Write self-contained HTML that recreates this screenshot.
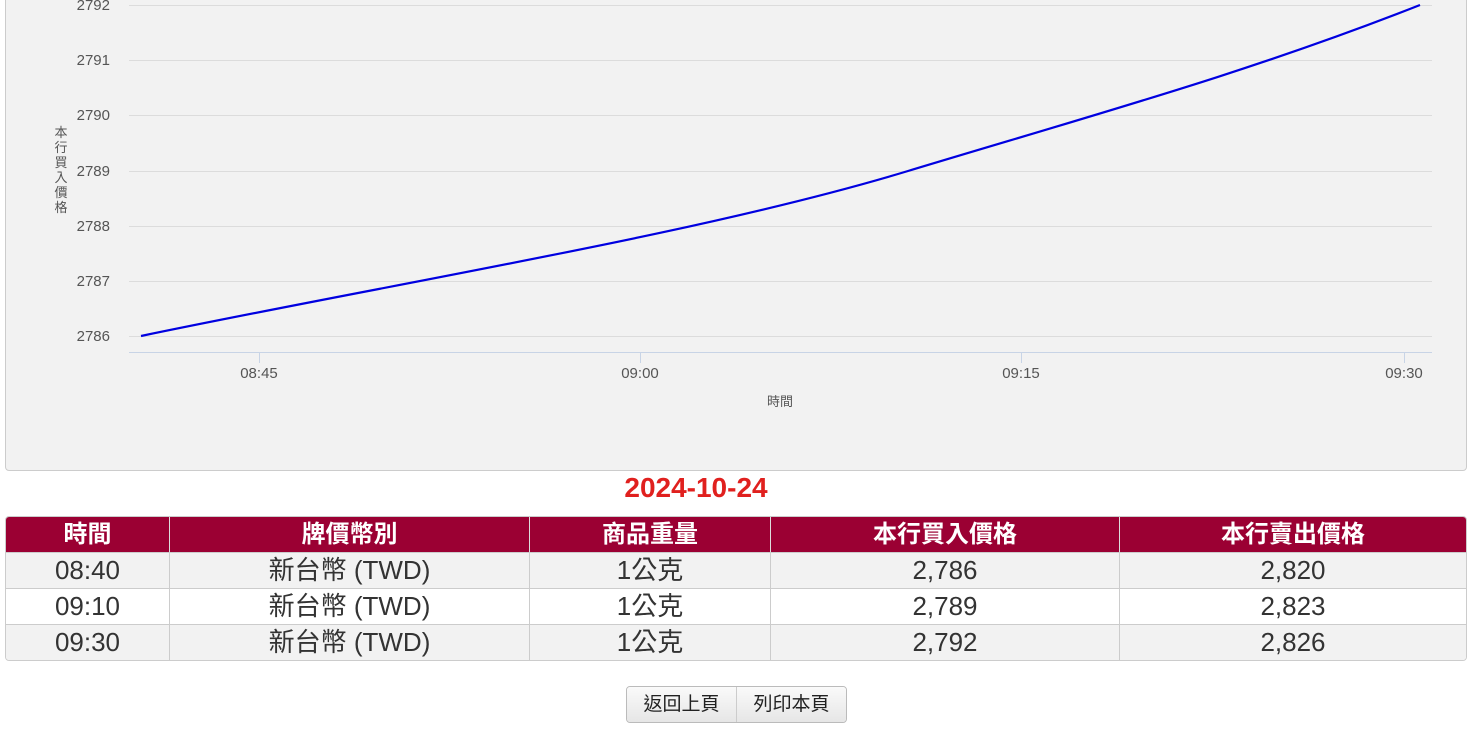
<!DOCTYPE html>
<html><head><meta charset="utf-8"><style>
body{margin:0;width:1478px;height:735px;background:#fff;font-family:"Liberation Sans","Noto Sans CJK TC",sans-serif;position:relative;overflow:hidden}
.chart{position:absolute;left:5px;top:-10px;width:1460px;height:479px;background:#f2f2f2;border:1px solid #ccc;border-radius:4px}
svg{position:absolute;left:0;top:0}
.date{position:absolute;left:0;width:1392px;top:472px;text-align:center;color:#e0201e;font-size:28px;font-weight:bold}
table{position:absolute;left:5px;top:516px;width:1462px;border-collapse:separate;border-spacing:0;border:1px solid #ccc;border-radius:4px;overflow:hidden;table-layout:fixed}
th{background:#9b0033;color:#fff;font-size:24px;height:35px;line-height:35px;padding:0;font-weight:bold;border-left:1px solid #ddd;overflow:hidden;white-space:nowrap}
td{font-size:26px;color:#333;height:35px;line-height:35px;padding:0;text-align:center;border-top:1px solid #ccc;border-left:1px solid #ccc;overflow:hidden;white-space:nowrap}
td span,th span{display:inline-block;line-height:35px;height:35px;vertical-align:top}
th:first-child,td:first-child{border-left:none}
tr.g td{background:#f2f2f2}
.btns{position:absolute;left:626px;top:686px;height:35px;display:flex;border:1px solid #bbb;border-radius:4px;overflow:hidden}
.btns div{width:109px;text-align:center;line-height:35px;font-size:19px;color:#222;background:linear-gradient(#fafafa,#e6e6e6)}
.btns div+div{border-left:1px solid #ccc}
</style></head><body>
<div class="chart"></div>
<svg width="1478" height="470" font-family="Liberation Sans, Noto Sans CJK TC, sans-serif">
<g stroke="#dcdcdc" stroke-width="1">
<line x1="129" x2="1432" y1="5.5" y2="5.5"/><line x1="129" x2="1432" y1="60.5" y2="60.5"/><line x1="129" x2="1432" y1="115.5" y2="115.5"/><line x1="129" x2="1432" y1="171.5" y2="171.5"/><line x1="129" x2="1432" y1="226.5" y2="226.5"/><line x1="129" x2="1432" y1="281.5" y2="281.5"/><line x1="129" x2="1432" y1="336.5" y2="336.5"/>
</g>
<g stroke="#c8d4e6"><line x1="129" x2="1432" y1="352.5" y2="352.5"/><line x1="259.5" x2="259.5" y1="352" y2="363"/><line x1="640.5" x2="640.5" y1="352" y2="363"/><line x1="1021.5" x2="1021.5" y1="352" y2="363"/><line x1="1404.5" x2="1404.5" y1="352" y2="363"/></g>
<g fill="#555" font-size="15" text-anchor="end">
<text x="110" y="10">2792</text><text x="110" y="65">2791</text><text x="110" y="120">2790</text><text x="110" y="176">2789</text><text x="110" y="231">2788</text><text x="110" y="286">2787</text><text x="110" y="341">2786</text>
</g>
<g fill="#555" font-size="15" text-anchor="middle">
<text x="259" y="378">08:45</text><text x="640" y="378">09:00</text><text x="1021" y="378">09:15</text><text x="1404" y="378">09:30</text>
<text x="780" y="406" font-size="13">時間</text>
</g>
<g fill="#555" font-size="13" text-anchor="middle">
<text x="61" y="137">本</text><text x="61" y="152">行</text><text x="61" y="167">買</text><text x="61" y="182">入</text><text x="61" y="197">價</text><text x="61" y="212">格</text>
</g>
<path d="M141,336 C400,282 700,234 908,171 C1100,113 1250,72 1420,5" fill="none" stroke="#0000e0" stroke-width="2.2"/>
</svg>
<div class="date">2024-10-24</div>
<table>
<tr><th style="width:163px"><span>時間</span></th><th style="width:359px"><span>牌價幣別</span></th><th style="width:240px"><span>商品重量</span></th><th style="width:348px"><span>本行買入價格</span></th><th><span>本行賣出價格</span></th></tr>
<tr class="g"><td><span>08:40</span></td><td><span>新台幣 (TWD)</span></td><td><span>1公克</span></td><td><span>2,786</span></td><td><span>2,820</span></td></tr>
<tr><td><span>09:10</span></td><td><span>新台幣 (TWD)</span></td><td><span>1公克</span></td><td><span>2,789</span></td><td><span>2,823</span></td></tr>
<tr class="g"><td><span>09:30</span></td><td><span>新台幣 (TWD)</span></td><td><span>1公克</span></td><td><span>2,792</span></td><td><span>2,826</span></td></tr>
</table>
<div class="btns"><div>返回上頁</div><div>列印本頁</div></div>
</body></html>
